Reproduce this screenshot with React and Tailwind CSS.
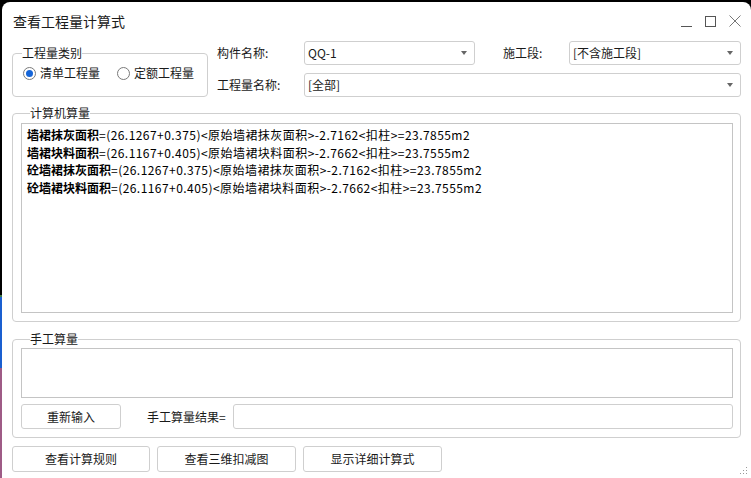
import React from 'react'

const font = { fontFamily: '"Noto Sans CJK SC", "Noto Sans", sans-serif' }

const lines = [
  ['墙裙抹灰面积', '=(26.1267+0.375)<原始墙裙抹灰面积>-2.7162<扣柱>=23.7855m2'],
  ['墙裙块料面积', '=(26.1167+0.405)<原始墙裙块料面积>-2.7662<扣柱>=23.7555m2'],
  ['砼墙裙抹灰面积', '=(26.1267+0.375)<原始墙裙抹灰面积>-2.7162<扣柱>=23.7855m2'],
  ['砼墙裙块料面积', '=(26.1167+0.405)<原始墙裙块料面积>-2.7662<扣柱>=23.7555m2'],
]

const Select = ({ value, className }) => (
  <div className={`h-[24px] border border-[#cfcfcf] rounded-[3px] flex items-center pl-[3px] pr-[7px] bg-white ${className}`}>
    <span className="flex-1 text-[12px] text-[#1a1a1a]">{value}</span>
    <svg width="6" height="4" viewBox="0 0 6 4"><path d="M0 0h6L3 4z" fill="#666" /></svg>
  </div>
)

const Radio = ({ checked, label }) => (
  <label className="flex items-center gap-[4px] text-[12px] text-[#1a1a1a]">
    <span className="w-[13px] h-[13px] rounded-full border border-[#7a7a7a] flex items-center justify-center bg-white">
      {checked && <span className="w-[7px] h-[7px] rounded-full bg-[#1565d8]" />}
    </span>
    {label}
  </label>
)

const Btn = ({ children, className }) => (
  <button className={`h-full border border-[#cfcfcf] rounded-[3px] bg-white text-[12px] text-[#1a1a1a] ${className}`}>
    {children}
  </button>
)

export default function App() {
  return (
    <div className="w-[751px] h-[478px] bg-black flex overflow-hidden" style={font}>
      <div className="w-[2px] flex flex-col">
        <div className="h-[295px] bg-black" />
        <div className="h-[2px] bg-[#3d7a45]" />
        <div className="h-[71px] bg-[#1a5fd0]" />
        <div className="flex-1 bg-[#9e5b86]" />
      </div>
      <div className="flex-1 mt-[2px] bg-white rounded-t-[8px] flex flex-col">
        {/* title bar */}
        <div className="h-[38px] flex items-center pl-[11px] pr-[10px]">
          <span className="text-[14px] text-[#1b1b1b] flex-1">查看工程量计算式</span>
          <div className="flex items-center gap-[13px] text-[#666]">
            <svg width="11" height="11" viewBox="0 0 11 11"><path d="M0 10.5h11" stroke="#555" strokeWidth="1" /></svg>
            <svg width="11" height="11" viewBox="0 0 11 11"><rect x="0.5" y="0.5" width="10" height="10" fill="none" stroke="#555" strokeWidth="1" /></svg>
            <svg width="12" height="12" viewBox="0 0 12 12"><path d="M0.5 0.5l11 11M11.5 0.5l-11 11" stroke="#777" strokeWidth="1" /></svg>
          </div>
        </div>

        <div className="flex flex-col px-[10px] mt-[1px]">
          {/* top area */}
          <div className="flex h-[56px]">
            <fieldset className="w-[196px] mt-[4px] h-[52px] border border-[#cfcfcf] rounded-[4px]">
              <legend className="ml-[9px] text-[12px] leading-[16px] text-[#1a1a1a]">工程量类别</legend>
              <div className="h-[24px] flex items-center pl-[10px] gap-[17px]">
                <Radio checked label="清单工程量" />
                <Radio label="定额工程量" />
              </div>
            </fieldset>
            <div className="flex-1 ml-[9px] flex flex-col gap-[8px]">
              <div className="flex items-center">
                <span className="w-[87px] text-[12px] text-[#1a1a1a]">构件名称:</span>
                <Select value="QQ-1" className="w-[171px]" />
                <span className="w-[66px] ml-[28px] text-[12px] text-[#1a1a1a]">施工段:</span>
                <Select value="[不含施工段]" className="flex-1" />
              </div>
              <div className="flex items-center">
                <span className="w-[87px] text-[12px] text-[#1a1a1a]">工程量名称:</span>
                <Select value="[全部]" className="flex-1" />
              </div>
            </div>
          </div>

          {/* computer calc */}
          <fieldset className="mt-[8px] h-[217px] border border-[#cfcfcf] rounded-[4px] pl-[8px] pr-[7px] flex flex-col">
            <legend className="ml-[9px] text-[12px] leading-[16px] text-[#1a1a1a]">计算机算量</legend>
            <div className="mt-[2px] h-[190px] border border-[#c4c4c4] pl-[5px] pt-[2px] text-[12px] leading-[17.6px] text-black">
              {lines.map(([name, rest], i) => (
                <div key={i}>
                  <span className="font-bold">{name}</span>
                  <span className="tracking-[0.45px]">{rest}</span>
                </div>
              ))}
            </div>
          </fieldset>

          {/* manual calc */}
          <fieldset className="mt-[9px] h-[107px] border border-[#cfcfcf] rounded-[4px] pl-[8px] pr-[7px] flex flex-col">
            <legend className="ml-[9px] text-[12px] leading-[16px] text-[#1a1a1a]">手工算量</legend>
            <div className="mt-[1px] h-[50px] border border-[#c4c4c4]" />
            <div className="mt-[6px] h-[25px] flex items-center">
              <Btn className="w-[100px]">重新输入</Btn>
              <span className="ml-[26px] w-[86px] text-[12px] text-[#1a1a1a]">手工算量结果=</span>
              <div className="flex-1 h-full border border-[#cfcfcf] rounded-[3px]" />
            </div>
          </fieldset>

          {/* bottom buttons */}
          <div className="mt-[8px] h-[26px] flex gap-[7px] items-end">
            <Btn className="w-[138px]">查看计算规则</Btn>
            <Btn className="w-[139px]">查看三维扣减图</Btn>
            <Btn className="w-[139px]">显示详细计算式</Btn>
            <svg className="ml-auto mr-[-7px] mb-[-3px]" width="8" height="8" viewBox="0 0 8 8">
              <rect x="6" y="0" width="1" height="1" fill="#999" />
              <rect x="6" y="3" width="1" height="1" fill="#999" />
              <rect x="3" y="3" width="1" height="1" fill="#999" />
              <rect x="6" y="6" width="1" height="1" fill="#999" />
              <rect x="3" y="6" width="1" height="1" fill="#999" />
              <rect x="0" y="6" width="1" height="1" fill="#999" />
            </svg>
          </div>
        </div>
      </div>
    </div>
  )
}
